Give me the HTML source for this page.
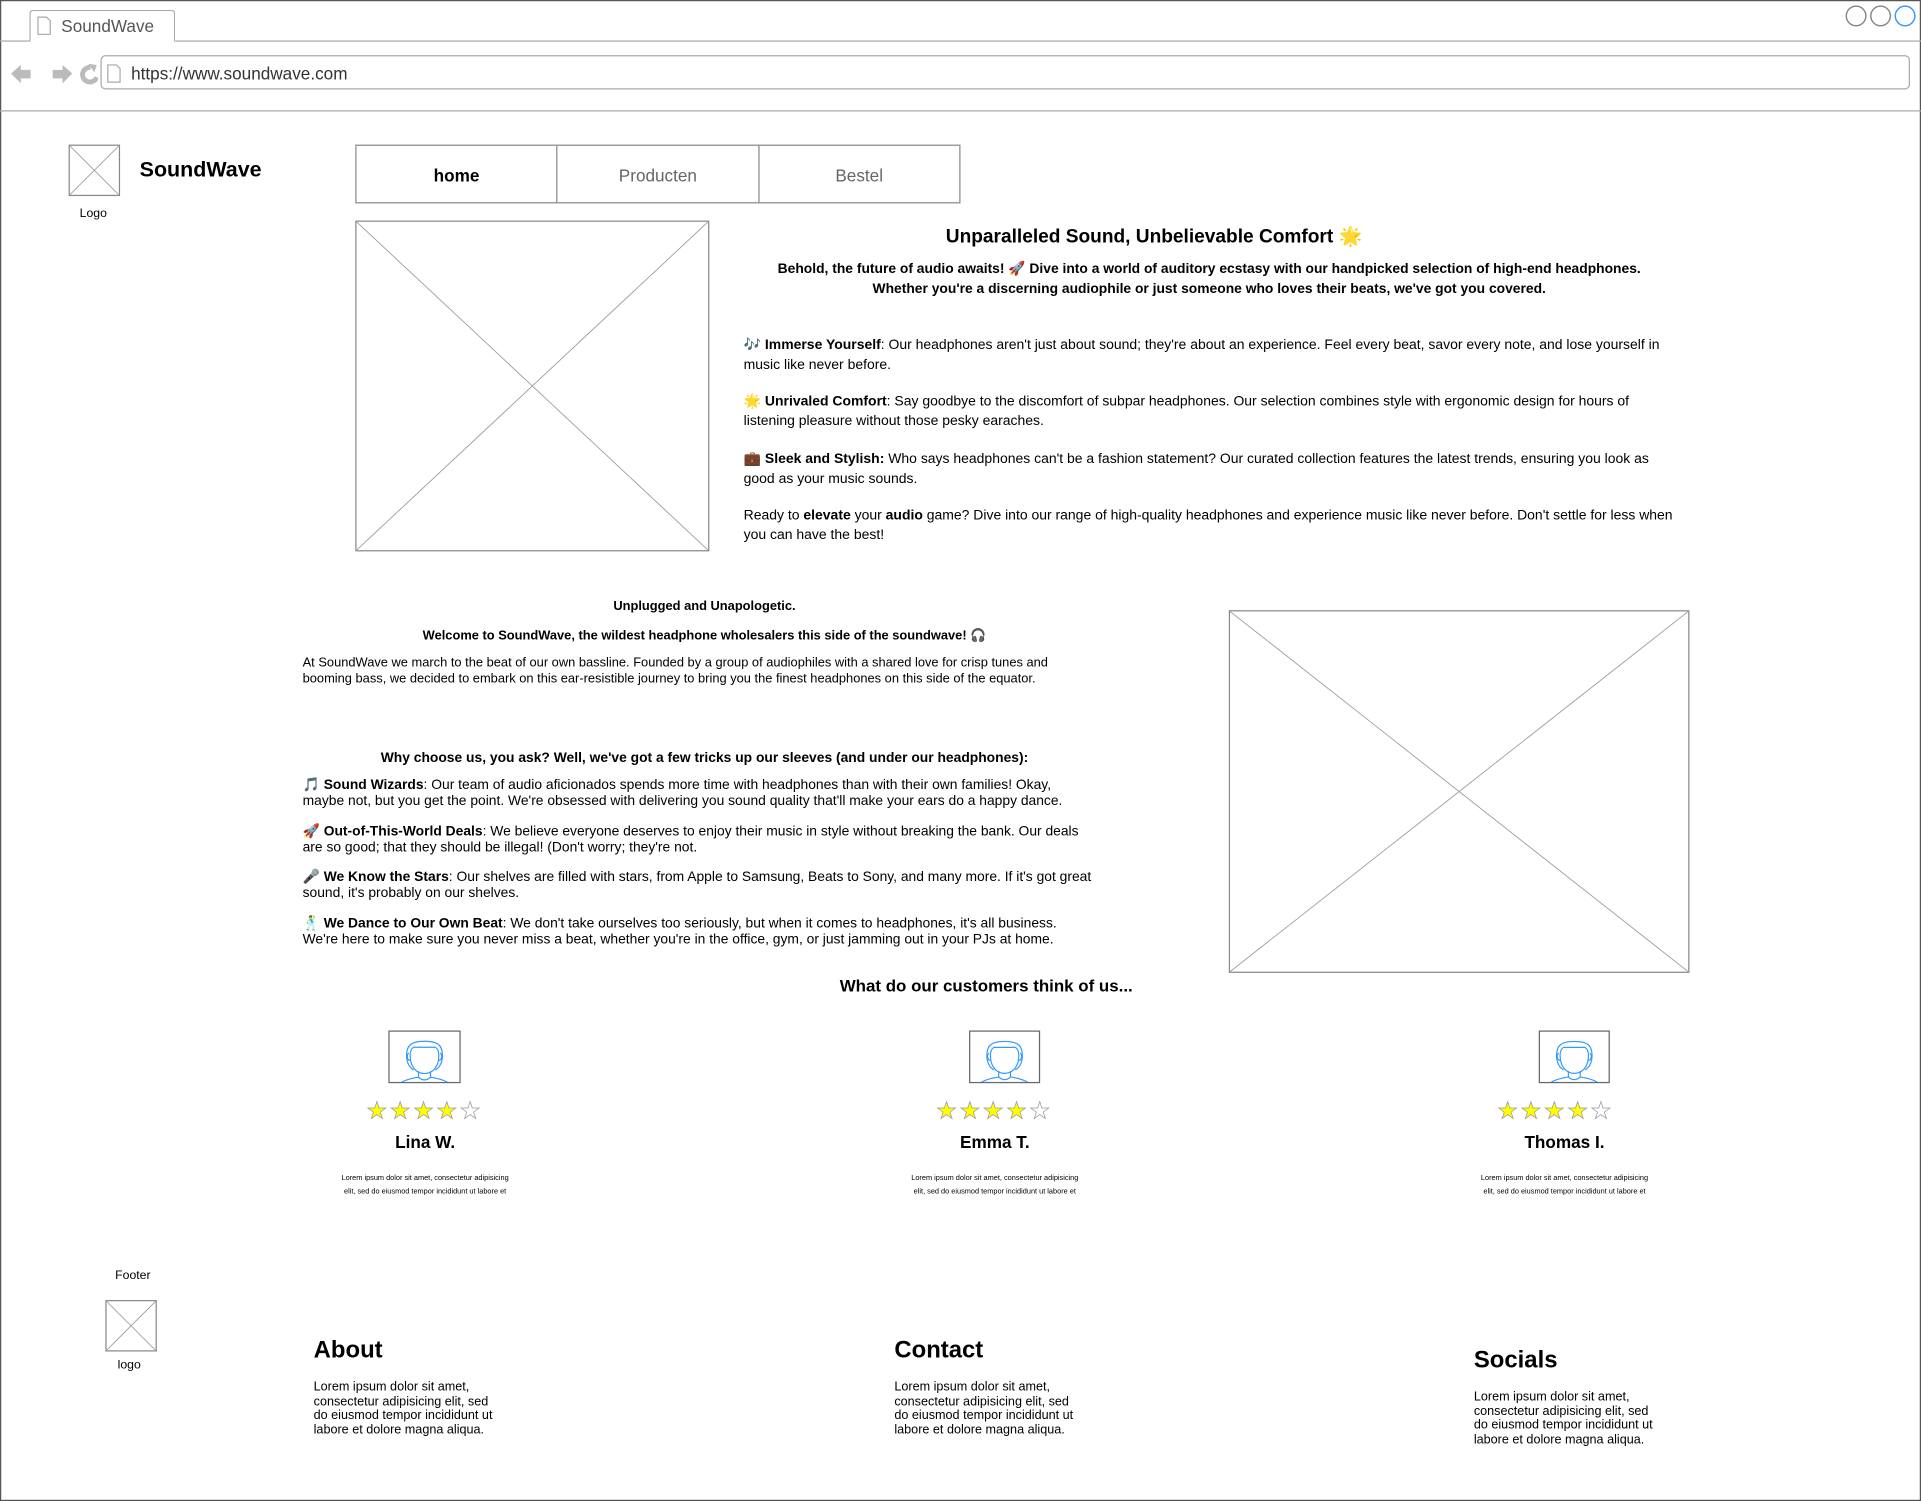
<!DOCTYPE html>
<html><head><meta charset="utf-8"><style>
html,body{margin:0;padding:0;width:1921px;height:1501px;overflow:hidden;background:#fff}
#w{position:absolute;left:0;top:0;width:1568px;height:1225px;transform:scale(1.22513,1.22531);transform-origin:0 0;font-family:"Liberation Sans",Arial,sans-serif;color:#000}
.a{position:absolute;white-space:nowrap}
.box{position:absolute;border:1px solid #888;box-sizing:border-box;overflow:hidden}
.box svg{position:absolute;left:0;top:0;width:100%;height:100%}
p{margin:0}
.t{position:absolute;font-size:11.5px;line-height:13px}
.stars{position:absolute;font-size:19px;letter-spacing:2px;color:#ff0;-webkit-text-stroke:0.6px #999;white-space:nowrap}
.stars span{color:#fff}
.lor{position:absolute;font-size:6px;line-height:11px;text-align:center;width:142px}
.name{position:absolute;font-size:14px;font-weight:bold;text-align:center;width:140px}
.fh{position:absolute;font-size:20px;font-weight:bold}
.ft{position:absolute;font-size:10.3px;line-height:11.5px;width:152px}
</style></head><body><div id="w">
<div style="position:absolute;left:0;top:0;width:1568px;height:1225px;border:1px solid #555;box-sizing:border-box"></div>
<div style="position:absolute;left:24px;top:8px;width:119px;height:26px;border:1px solid #aaa;border-bottom:none;border-radius:3px 3px 0 0;background:#fff;box-sizing:border-box"></div>
<div style="position:absolute;left:0;top:33px;width:24px;border-top:1px solid #aaa"></div>
<div style="position:absolute;left:143px;top:33px;width:1425px;border-top:1px solid #aaa"></div>
<svg class="a" style="left:30px;top:13px" width="12" height="16"><path d="M1 1h7l3 3v11H1z" fill="#fff" stroke="#aaa"/></svg>
<div class="a" style="left:50px;top:13px;font-size:14px;color:#555">SoundWave</div>
<svg class="a" style="left:1505px;top:4px" width="60" height="20"><circle cx="10" cy="9" r="8" fill="none" stroke="#888" stroke-width="1.2"/><circle cx="30" cy="9" r="8" fill="none" stroke="#888" stroke-width="1.2"/><circle cx="50" cy="9" r="8" fill="none" stroke="#39f" stroke-width="1.2"/></svg>
<svg class="a" style="left:8px;top:51px" width="72" height="20"><path d="M1 9l8-7v4h8v7H9v4z" fill="#bbb"/><path d="M51 9l-8-7v4h-8v7h8v4z" fill="#bbb"/><path d="M66 4a6 6 0 1 0 5 8" fill="none" stroke="#bbb" stroke-width="4"/><path d="M64 1l7 1-2 6z" fill="#bbb"/></svg>
<div style="position:absolute;left:82px;top:45px;width:1477px;height:28px;border:1px solid #aaa;border-radius:4px;box-sizing:border-box"></div>
<svg class="a" style="left:87px;top:52px" width="12" height="16"><path d="M1 1h7l3 3v11H1z" fill="#fff" stroke="#aaa"/></svg>
<div class="a" style="left:107px;top:52px;font-size:14px;color:#333">https://www.soundwave.com</div>
<div style="position:absolute;left:0;top:90px;width:1568px;border-top:1px solid #aaa"></div>
<div class="box" style="left:56px;top:118px;width:42px;height:42px"><svg viewBox="0 0 42 42" preserveAspectRatio="none"><path d="M0 0L42 42M42 0L0 42" stroke="#999" stroke-width="0.7"/></svg></div>
<div class="a" style="left:65px;top:169px;font-size:10px">Logo</div>
<div class="a" style="left:114px;top:128px;font-size:17.5px;font-weight:bold">SoundWave</div>
<div style="position:absolute;left:290px;top:118px;width:494px;height:48px;border:1px solid #888;box-sizing:border-box;display:flex">
<div style="flex:1;border-right:1px solid #888;text-align:center;line-height:48px;font-size:14px;font-weight:bold">home</div>
<div style="flex:1;border-right:1px solid #888;text-align:center;line-height:48px;font-size:14px;color:#666">Producten</div>
<div style="flex:1;text-align:center;line-height:48px;font-size:14px;color:#666">Bestel</div></div>
<div class="box" style="left:290px;top:180px;width:289px;height:270px"><svg viewBox="0 0 289 270" preserveAspectRatio="none"><path d="M0 0L289 270M289 0L0 270" stroke="#999" stroke-width="0.7"/></svg></div>
<div class="a" style="left:607px;width:670px;top:184px;text-align:center;font-size:15.6px;font-weight:bold">Unparalleled Sound, Unbelievable Comfort 🌟</div>
<div class="a" style="left:617px;width:740px;top:212px;text-align:center;font-size:11.3px;font-weight:bold;line-height:16px;white-space:normal">Behold, the future of audio awaits! 🚀 Dive into a world of auditory ecstasy with our handpicked selection of high-end headphones. Whether you're a discerning audiophile or just someone who loves their beats, we've got you covered.</div>
<div class="t" style="left:607px;width:770px;top:274px;line-height:16px;font-size:11.4px">🎶 <b>Immerse Yourself</b>: Our headphones aren't just about sound; they're about an experience. Feel every beat, savor every note, and lose yourself in music like never before.</div>
<div class="t" style="left:607px;width:740px;top:320px;line-height:16px;font-size:11.4px">🌟 <b>Unrivaled Comfort</b>: Say goodbye to the discomfort of subpar headphones. Our selection combines style with ergonomic design for hours of listening pleasure without those pesky earaches.</div>
<div class="t" style="left:607px;width:760px;top:367px;line-height:16px;font-size:11.4px">💼 <b>Sleek and Stylish:</b> Who says headphones can't be a fashion statement? Our curated collection features the latest trends, ensuring you look as good as your music sounds.</div>
<div class="t" style="left:607px;width:775px;top:413px;line-height:16px;font-size:11.4px">Ready to <b>elevate</b> your <b>audio</b> game? Dive into our range of high-quality headphones and experience music like never before. Don't settle for less when you can have the best!</div>
<div class="a" style="left:247px;width:656px;top:489px;text-align:center;font-size:10.5px;font-weight:bold">Unplugged and Unapologetic.</div>
<div class="a" style="left:247px;width:656px;top:512px;text-align:center;font-size:10.5px;font-weight:bold">Welcome to SoundWave, the wildest headphone wholesalers this side of the soundwave! 🎧</div>
<div class="t" style="left:247px;width:630px;top:535px;font-size:10.5px">At SoundWave we march to the beat of our own bassline. Founded by a group of audiophiles with a shared love for crisp tunes and booming bass, we decided to embark on this ear-resistible journey to bring you the finest headphones on this side of the equator.</div>
<div class="a" style="left:247px;width:656px;top:613px;text-align:center;font-size:11.3px;font-weight:bold">Why choose us, you ask? Well, we've got a few tricks up our sleeves (and under our headphones):</div>
<div class="t" style="left:247px;width:640px;top:635px;font-size:11.3px">🎵 <b>Sound Wizards</b>: Our team of audio aficionados spends more time with headphones than with their own families! Okay, maybe not, but you get the point. We're obsessed with delivering you sound quality that'll make your ears do a happy dance.</div>
<div class="t" style="left:247px;width:648px;top:673px;font-size:11.3px">🚀 <b>Out-of-This-World Deals</b>: We believe everyone deserves to enjoy their music in style without breaking the bank. Our deals are so good; that they should be illegal! (Don't worry; they're not.</div>
<div class="t" style="left:247px;width:665px;top:710px;font-size:11.3px">🎤 <b>We Know the Stars</b>: Our shelves are filled with stars, from Apple to Samsung, Beats to Sony, and many more. If it's got great sound, it's probably on our shelves.</div>
<div class="t" style="left:247px;width:640px;top:748px;font-size:11.3px">🕺 <b>We Dance to Our Own Beat</b>: We don't take ourselves too seriously, but when it comes to headphones, it's all business. We're here to make sure you never miss a beat, whether you're in the office, gym, or just jamming out in your PJs at home.</div>
<div class="box" style="left:1003px;top:498px;width:376px;height:296px"><svg viewBox="0 0 376 296" preserveAspectRatio="none"><path d="M0 0L376 296M376 0L0 296" stroke="#999" stroke-width="0.7"/></svg></div>
<div class="a" style="left:600px;width:410px;top:797px;text-align:center;font-size:13.8px;font-weight:bold">What do our customers think of us...</div>
<svg width="0" height="0" style="position:absolute"><defs><g id="av" fill="none" stroke="#39f" stroke-width="1"><path d="M20 32c-4-2-6-7-6-12 0-8 3-12 15-12s15 4 15 12c0 5-2 10-6 12"/><path d="M17 20c0 9 5 15 12 15s12-6 12-15c0-3-1-6-3-7-4 0-14 0-18 0-2 1-3 4-3 7z"/><path d="M16 18c-2 0-2 6 1 6M42 18c2 0 2 6-1 6"/><path d="M24 33v5c-6 1-14 3-16 6v0M34 33v5c6 1 14 3 16 6"/><path d="M24 38c3 3 7 3 10 0"/><path d="M14 42v2M44 42v2"/></g></defs></svg>
<div class="box" style="left:317px;top:841px;width:59px;height:43px;border-color:#666"><svg viewBox="0 0 58 42"><use href="#av"/></svg></div>
<div class="box" style="left:791px;top:841px;width:58px;height:43px;border-color:#666"><svg viewBox="0 0 58 42"><use href="#av"/></svg></div>
<div class="box" style="left:1256px;top:841px;width:58px;height:43px;border-color:#666"><svg viewBox="0 0 58 42"><use href="#av"/></svg></div>
<div class="stars" style="left:299px;top:896px">★★★★<span>★</span></div>
<div class="stars" style="left:764px;top:896px">★★★★<span>★</span></div>
<div class="stars" style="left:1222px;top:896px">★★★★<span>★</span></div>
<div class="name" style="left:277px;top:924px">Lina W.</div>
<div class="name" style="left:742px;top:924px">Emma T.</div>
<div class="name" style="left:1207px;top:924px">Thomas I.</div>
<div class="lor" style="left:276px;top:957px">Lorem ipsum dolor sit amet, consectetur adipisicing elit, sed do eiusmod tempor incididunt ut labore et</div>
<div class="lor" style="left:741px;top:957px">Lorem ipsum dolor sit amet, consectetur adipisicing elit, sed do eiusmod tempor incididunt ut labore et</div>
<div class="lor" style="left:1206px;top:957px">Lorem ipsum dolor sit amet, consectetur adipisicing elit, sed do eiusmod tempor incididunt ut labore et</div>
<div class="a" style="left:94px;top:1036px;font-size:10px">Footer</div>
<div class="box" style="left:86px;top:1061px;width:42px;height:42px"><svg viewBox="0 0 42 42" preserveAspectRatio="none"><path d="M0 0L42 42M42 0L0 42" stroke="#999" stroke-width="0.7"/></svg></div>
<div class="a" style="left:96px;top:1109px;font-size:10px">logo</div>
<div class="fh" style="left:256px;top:1091px;font-size:19.5px">About</div>
<div class="ft" style="left:256px;top:1127px">Lorem ipsum dolor sit amet, consectetur adipisicing elit, sed do eiusmod tempor incididunt ut labore et dolore magna aliqua.</div>
<div class="fh" style="left:730px;top:1091px;font-size:19.5px">Contact</div>
<div class="ft" style="left:730px;top:1127px">Lorem ipsum dolor sit amet, consectetur adipisicing elit, sed do eiusmod tempor incididunt ut labore et dolore magna aliqua.</div>
<div class="fh" style="left:1203px;top:1099px;font-size:19.5px">Socials</div>
<div class="ft" style="left:1203px;top:1135px">Lorem ipsum dolor sit amet, consectetur adipisicing elit, sed do eiusmod tempor incididunt ut labore et dolore magna aliqua.</div>
</div></body></html>
